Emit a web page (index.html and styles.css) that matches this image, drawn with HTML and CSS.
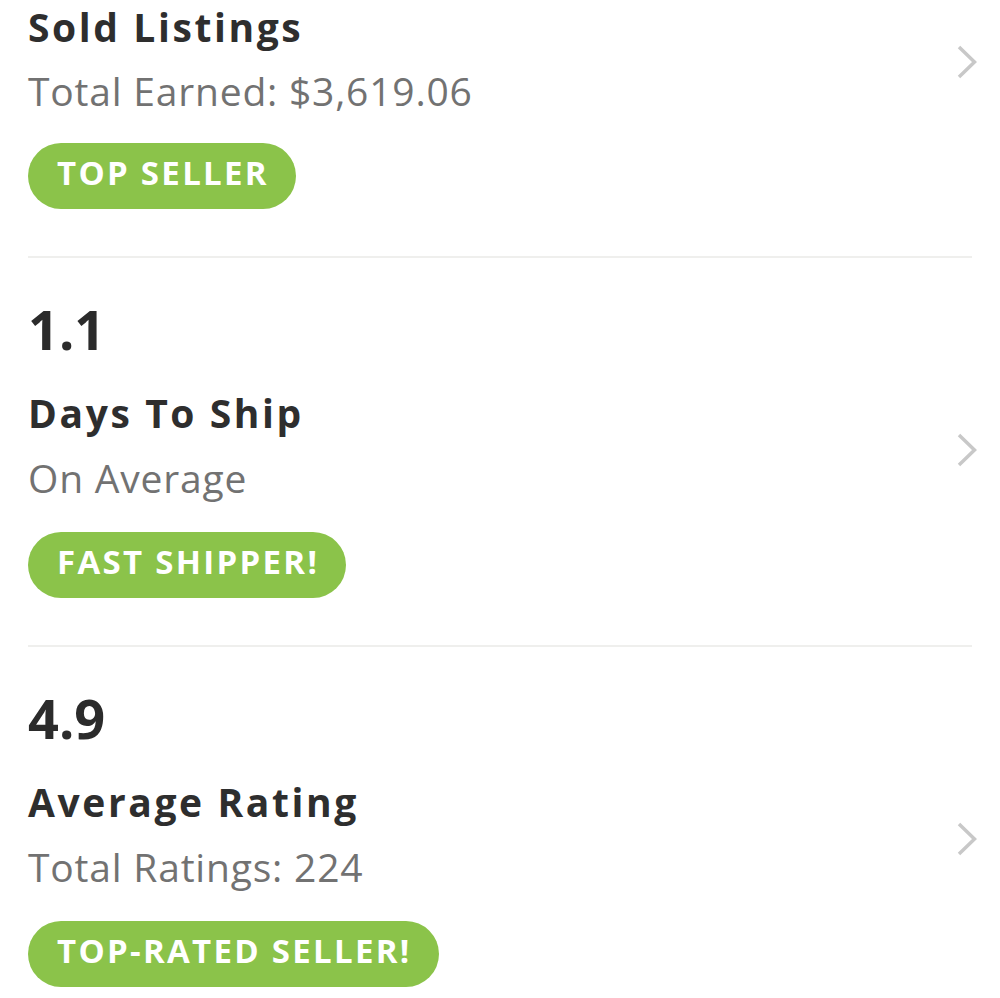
FILE: index.html
```html
<!DOCTYPE html>
<html lang="en">
<head>
    <meta charset="UTF-8">
    <meta name="viewport" content="width=device-width, initial-scale=1.0">
    <title>Seller Stats</title>
    <link rel="stylesheet" href="styles.css">
</head>
<body>
    <ul class="stats">
        <li class="stat stat-first">
            <div class="stat-body">
                <div class="stat-title">Sold Listings</div>
                <div class="stat-sub">Total Earned: $3,619.06</div>
                <span class="badge">TOP SELLER</span>
            </div>
            <svg class="chevron" viewBox="0 0 20 34" width="20" height="34"><polyline points="2,2 17.5,17 2,32"/></svg>
        </li>
        <li class="stat">
            <div class="stat-body">
                <div class="stat-value">1.1</div>
                <div class="stat-title">Days To Ship</div>
                <div class="stat-sub">On Average</div>
                <span class="badge">FAST SHIPPER!</span>
            </div>
            <svg class="chevron" viewBox="0 0 20 34" width="20" height="34"><polyline points="2,2 17.5,17 2,32"/></svg>
        </li>
        <li class="stat">
            <div class="stat-body">
                <div class="stat-value">4.9</div>
                <div class="stat-title">Average Rating</div>
                <div class="stat-sub">Total Ratings: 224</div>
                <span class="badge">TOP-RATED SELLER!</span>
            </div>
            <svg class="chevron" viewBox="0 0 20 34" width="20" height="34"><polyline points="2,2 17.5,17 2,32"/></svg>
        </li>
    </ul>
</body>
</html>
```

FILE: styles.css
```css
body {
    font-family: "Open Sans", Lato, sans-serif;
    margin: 0;
    padding: 0;
    background-color: #fff;
    color: #333;
    overflow: hidden;
}
.stats {
    list-style-type: none;
    margin: 0;
    padding: 0;
}
.stat {
    display: flex;
    align-items: flex-start;
    margin: 0 28px;
    padding: 41px 0 47px 0;
    border-bottom: 2px solid #efefed;
}
.stat-first {
    padding-top: 3px;
}
.stat-body {
    flex: 1;
    display: flex;
    flex-direction: column;
    align-items: flex-start;
}
.stat-value {
    font-size: 54px;
    line-height: 60px;
    font-weight: bold;
    color: #2b2b2b;
    margin-bottom: 30px;
}
.stat-title {
    font-size: 39px;
    line-height: 48px;
    font-weight: bold;
    letter-spacing: 2.6px;
    color: #2e2e2e;
}
.stat-sub {
    font-size: 39px;
    line-height: 48px;
    letter-spacing: 0.8px;
    color: #727272;
    margin-top: 17px;
}
.badge {
    display: inline-block;
    margin-top: 30px;
    height: 60px;
    line-height: 60px;
    padding: 0 27px 6px 29px;
    border-radius: 33px;
    background-color: #8bc34a;
    color: #fff;
    font-size: 33px;
    font-weight: bold;
    letter-spacing: 2.3px;
}
.stat-first .stat-sub {
    margin-top: 16px;
}
.stat-first .badge {
    margin-top: 28px;
}
.chevron {
    margin: 134px -5px 0 0;
    fill: none;
    stroke: #c8c8c8;
    stroke-width: 3.5;
}
.stat-first .chevron {
    margin-top: 42px;
}
```
